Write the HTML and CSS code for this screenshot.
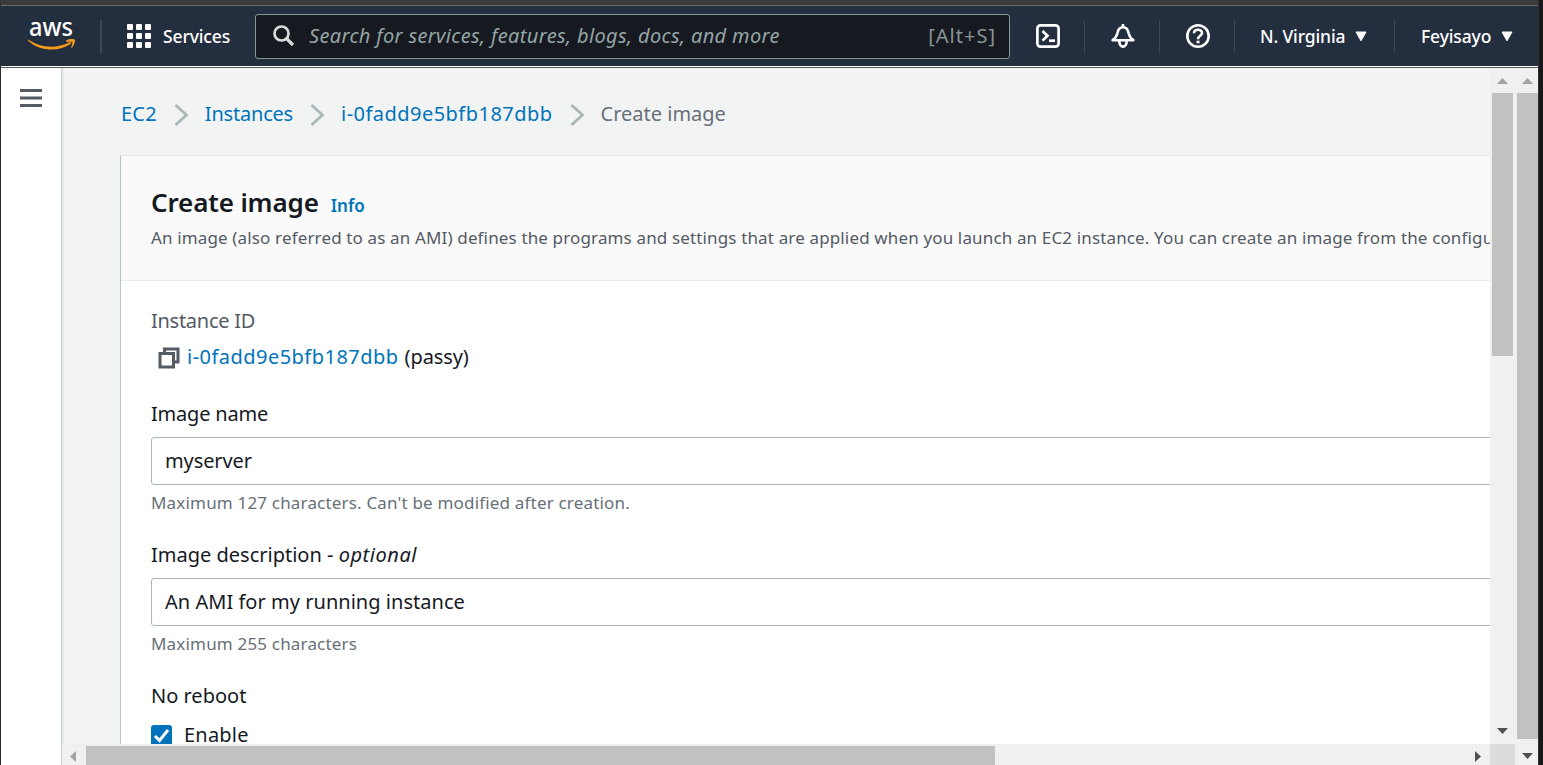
FILE: index.html
```
<!DOCTYPE html>
<html lang="en">
<head>
<meta charset="utf-8">
<title>Create image | EC2</title>
<link rel="stylesheet" href="styles.css">
</head>
<body>
<div class="window">
  <header class="topnav">
    <div class="brand">
      <svg class="aws-mark" width="48" height="32" viewBox="0 0 48 32">
        <text x="1" y="16" class="aws-word" textLength="44" lengthAdjust="spacingAndGlyphs">aws</text>
        <path d="M.5 19.800C13 28.200 29 28.700 41.500 22.200C43 21.500 44 22.700 42.700 23.800C31 32.600 11.500 31.300 .2 20.700C-.3 20 0 19.500 .5 19.800Z" fill="#f79a1c"/>
        <path d="M38.300 20.600C41 18.700 46 18.900 46.800 19.700C47.400 21 46.300 25.200 44 27.600C43.500 28 42.900 27.700 43.200 27C44 25 44.700 22.800 44.300 22.100C43.700 21.400 41.200 21.600 39 21.900C38.100 22 37.700 21.100 38.300 20.600Z" fill="#f79a1c"/>
      </svg>
    </div>
    <div class="services">
      <svg width="24" height="24" viewBox="0 0 24 24" fill="#fff"><rect width="6" height="6" rx="1"/><rect x="9" width="6" height="6" rx="1"/><rect x="18" width="6" height="6" rx="1"/><rect y="9" width="6" height="6" rx="1"/><rect x="9" y="9" width="6" height="6" rx="1"/><rect x="18" y="9" width="6" height="6" rx="1"/><rect y="18" width="6" height="6" rx="1"/><rect x="9" y="18" width="6" height="6" rx="1"/><rect x="18" y="18" width="6" height="6" rx="1"/></svg>
      <span class="nav-text">Services</span>
    </div>
    <div class="search">
      <svg width="22" height="22" viewBox="0 0 22 22" fill="none" stroke="#d5dbdb"><circle cx="8.500" cy="8.500" r="7" stroke-width="2.700"/><path d="M13.500 13.500L20 20" stroke-width="3.200"/></svg>
      <span class="placeholder">Search for services, features, blogs, docs, and more</span>
      <span class="shortcut">[Alt+S]</span>
    </div>
    <div class="nav-icon">
      <svg width="24" height="24" viewBox="0 0 24 24" fill="none" stroke="#fff"><rect x="1.400" y="1.400" width="21.200" height="21.200" rx="3" stroke-width="2.700"/><path d="M6.500 7L11.500 11.800L6.500 16.600" stroke-width="2.700"/><path d="M13 16.700H19" stroke-width="2.700"/></svg>
    </div>
    <div class="nav-icon">
      <svg width="24" height="24" viewBox="0 0 24 24" fill="none" stroke="#fff" stroke-width="2.600"><path d="M1.600 16.200C4.500 14.500 5.500 12.500 6.300 9.500C7 5.500 9 3.300 12 3.300C15 3.300 17 5.500 17.700 9.500C18.500 12.500 19.500 14.500 22.400 16.200Z" stroke-linejoin="round"/><path d="M12 0V3M8.300 17C8.300 24.500 15.700 24.500 15.700 17"/></svg>
    </div>
    <div class="nav-icon">
      <svg width="24" height="24" viewBox="0 0 24 24" fill="none" stroke="#fff" stroke-width="2.600"><circle cx="12" cy="12" r="10.700"/><path d="M8 9.300C8 4.700 16 4.700 16 9.100C16 12 12 11.700 12 15.300"/><path d="M12 16.700V19.300" stroke-width="3"/></svg>
    </div>
    <div class="nav-menu region"><span class="nav-text">N. Virginia</span><svg width="12" height="11" viewBox="0 0 12 11"><path d="M1 1H11L6 9.800Z" fill="#fff" stroke="#fff" stroke-linejoin="round"/></svg></div>
    <div class="nav-menu account"><span class="nav-text">Feyisayo</span><svg width="12" height="11" viewBox="0 0 12 11"><path d="M1 1H11L6 9.800Z" fill="#fff" stroke="#fff" stroke-linejoin="round"/></svg></div>
  </header>
  <div class="workspace">
    <aside class="side-rail">
      <svg width="22" height="18" viewBox="0 0 22 18" fill="#545b64"><path d="M0 0H22V3H0ZM0 7.500H22V10.500H0ZM0 15H22V18H0Z"/></svg>
    </aside>
    <main class="frame">
      <div class="content">
        <nav class="crumbs">
          <a class="crumb-ec2">EC2</a>
          <svg width="15" height="24" viewBox="0 0 15 24"><path d="M1.500 2L12.500 12L1.500 22" fill="none" stroke="#aab7b8" stroke-width="2.800"/></svg>
          <a class="crumb-instances">Instances</a>
          <svg width="15" height="24" viewBox="0 0 15 24"><path d="M1.500 2L12.500 12L1.500 22" fill="none" stroke="#aab7b8" stroke-width="2.800"/></svg>
          <a class="instance-id">i-0fadd9e5bfb187dbb</a>
          <svg width="15" height="24" viewBox="0 0 15 24"><path d="M1.500 2L12.500 12L1.500 22" fill="none" stroke="#aab7b8" stroke-width="2.800"/></svg>
          <span class="current">Create image</span>
        </nav>
        <section class="panel">
          <div class="panel-head">
            <div class="title-row"><h1>Create image</h1><a class="info">Info</a></div>
            <p class="lead">An image (also referred to as an AMI) defines the programs and settings that are applied when you launch an EC2 instance. You can create an image from the configuration</p>
          </div>
          <div class="panel-body">
            <div class="label muted">Instance ID</div>
            <div class="instance">
              <svg width="22" height="22" viewBox="0 0 22 22" fill="none" stroke="#545b64" stroke-width="3"><path d="M6.500 5V2H20V15H17"/><rect x="2" y="6.500" width="13.500" height="13.500"/></svg>
              <a class="instance-id">i-0fadd9e5bfb187dbb</a><span class="alias">(passy)</span>
            </div>
            <div class="label tight">Image name</div>
            <div class="input">myserver</div>
            <div class="hint">Maximum 127 characters. Can't be modified after creation.</div>
            <div class="label">Image description - <i>optional</i></div>
            <div class="input wide">An AMI for my running instance</div>
            <div class="hint">Maximum 255 characters</div>
            <div class="label">No reboot</div>
            <div class="check"><span class="box"><svg width="21" height="21" viewBox="0 0 21 21"><path d="M4 11L8.500 15.500L17 5" fill="none" stroke="#fff" stroke-width="3"/></svg></span><span class="check-text">Enable</span></div>
          </div>
        </section>
      </div>
      <div class="vbar inner">
        <svg class="up" width="11" height="6"><path d="M0 6L5.500 0L11 6Z" fill="#a3a3a3"/></svg>
        <div class="vthumb"></div>
        <svg class="down" width="11" height="6"><path d="M0 0H11L5.500 6Z" fill="#505050"/></svg>
      </div>
      <div class="hbar">
        <svg width="6" height="11"><path d="M6 0V11L0 5.500Z" fill="#a3a3a3"/></svg>
        <div class="hthumb"></div>
        <svg class="right" width="6" height="11"><path d="M0 0V11L6 5.500Z" fill="#505050"/></svg>
      </div>
      <div class="corner"></div>
    </main>
    <div class="vbar outer">
      <svg class="up" width="11" height="6"><path d="M0 6L5.500 0L11 6Z" fill="#a3a3a3"/></svg>
      <div class="vthumb"></div>
      <svg class="down" width="11" height="6"><path d="M0 0H11L5.500 6Z" fill="#505050"/></svg>
    </div>
  </div>
</div>
</body>
</html>
```
FILE: styles.css
```
* { box-sizing: border-box; }
html, body { height: 100%; }
body { margin: 0; overflow: hidden; font: 20px/30px "Noto Sans", "Open Sans", sans-serif; color: #16191f; background: #181818; }
svg { display: block; flex: none; overflow: visible; }
h1, p { margin: 0; }
a { color: #0073bb; text-decoration: none; }

.window { display: flex; flex-direction: column; width: 1539px; height: 765px; border-left: 1px solid #2c2c2c; border-right: 1px solid #303030; border-top: 5px solid #3b3b3b; background: #fff; }

/* Top navigation */
.topnav { display: flex; flex: none; align-items: center; height: 61px; border-top: 1px solid #6c6c6c; background: #232f3e; color: #fff; }
.brand { display: flex; align-items: center; width: 101px; height: 33px; padding-left: 27px; border-right: 2px solid #414750; }
.aws-word { font: 500 26px "Noto Sans", sans-serif; fill: #fff; }
.services { display: flex; align-items: center; width: 153px; padding-left: 25px; gap: 12px; }
.nav-text { padding-bottom: 1px; font-size: 17.500px; font-weight: 500; letter-spacing: -.14px; white-space: nowrap; }
.search { display: flex; align-items: center; width: 755px; height: 45px; padding: 0 13px 0 17px; border: 1px solid #879596; border-radius: 3px; background: #16191f; color: #879596; white-space: nowrap; }
.placeholder { margin-left: 14px; font-style: italic; letter-spacing: .35px; color: #95a5a6; }
.shortcut { margin-left: auto; letter-spacing: 1px; }
.nav-icon { display: flex; align-items: center; justify-content: center; width: 75px; height: 33px; padding-left: 2px; border-right: 1px solid #414750; }
.nav-menu { display: flex; align-items: center; height: 33px; gap: 10px; }
.region { width: 160px; padding-left: 25px; border-right: 1px solid #414750; }
.account { padding-left: 26px; }

/* Frame */
.workspace { display: flex; flex: 1; min-height: 0; border-top: 1px solid #fff; box-shadow: inset 0 1px #545b64; padding-top: 1px; }
.side-rail { flex: none; width: 61px; padding: 21px 0 0 19px; border-right: 1px solid #c9cfcf; }
.frame { display: grid; grid-template-columns: 1428px 25px; grid-template-rows: 1fr 21px; flex: none; width: 1453px; min-height: 0; }
.content { min-width: 0; min-height: 0; overflow: hidden; background: #f2f3f3; box-shadow: inset 2px 0 #e8ebeb; padding: 30px 0 0 58px; }

.crumbs { display: flex; align-items: center; height: 32px; padding-left: 1px; white-space: nowrap; }
.crumbs svg { margin: 1px 16px 0 17px; }
.crumb-ec2 { letter-spacing: .2px; }
.crumb-instances { letter-spacing: -.2px; }
.instance-id { letter-spacing: .47px; }
.current { color: #687078; }

.panel { width: 1800px; margin-top: 25px; border-top: 1px solid #e4e7e7; border-left: 1px solid #b8c2c2; background: #fff; white-space: nowrap; }
.panel-head { height: 125px; padding: 27px 30px 0; border-bottom: 1px solid #eaeded; background: #fafafa; }
.title-row { display: flex; align-items: baseline; gap: 12px; height: 41px; }
h1 { font-size: 26px; line-height: 38px; font-weight: 600; letter-spacing: -.13px; }
.info { font-size: 17px; font-weight: 600; }
.lead { font-size: 17px; line-height: 27px; letter-spacing: .145px; color: #545b64; }
.panel-body { padding: 24px 30px 0; }
.label { height: 30px; line-height: 32px; }
.label i { letter-spacing: .55px; }
.tight { letter-spacing: -.2px; }
.muted { letter-spacing: -.27px; color: #545b64; }
.instance { display: flex; align-items: center; height: 30px; margin: 6px 0 27px; padding: 2px 0 0 7px; }
.instance svg { margin-right: 7px; margin-top: 2px; }
.alias { margin-left: 6px; letter-spacing: -.1px; }
.input { height: 48px; margin-top: 9px; padding: 0 13px; border: 1px solid #aab7b8; border-radius: 3px; line-height: 46px; letter-spacing: -.1px; }
.input.wide { letter-spacing: .03px; }
.hint { margin: 4px 0 23px; font-size: 17px; line-height: 27px; letter-spacing: .18px; color: #687078; }
.check { display: flex; align-items: center; height: 30px; margin-top: 9px; gap: 12px; }
.check-text { padding-top: 2px; letter-spacing: .2px; }
.box { width: 21px; height: 21px; margin-top: 2px; border-radius: 3px; background: #0073bb; }

/* Scrollbars */
.vbar { display: flex; flex-direction: column; align-items: center; background: #f0f0f0; }
.vbar .up { margin-top: 10px; }
.vbar .down { margin-top: auto; }
.vthumb { width: 21px; margin-top: 9px; background: #c1c1c1; }
.inner .vthumb { height: 263px; }
.inner .down { margin-bottom: 10px; }
.outer { flex: none; width: 23px; padding-left: 2px; }
.outer .vthumb { height: 646px; }
.outer .down { margin-bottom: 6px; }
.hbar { display: flex; align-items: center; padding: 2px 9px 0 8px; background: #f0f0f0; }
.hbar svg { margin-top: 2px; }
.hthumb { align-self: stretch; width: 909px; margin-left: 10px; background: #c1c1c1; }
.hbar .right { margin-left: auto; }
.corner { background: #dcdcdc; }
```
